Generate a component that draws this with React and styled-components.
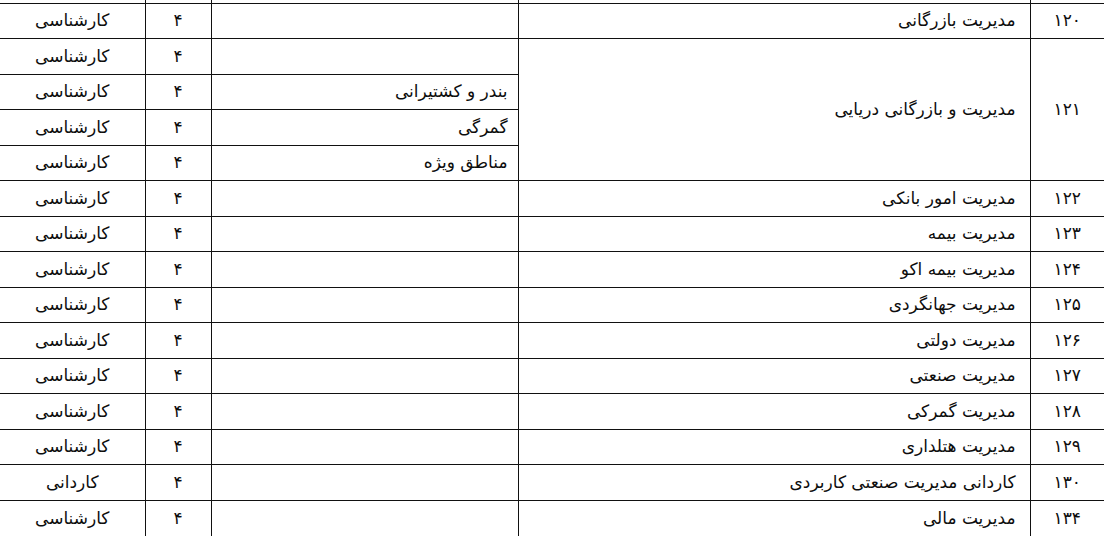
import React from 'react';
import styled, { createGlobalStyle } from 'styled-components';

const GlobalStyle = createGlobalStyle`
  html, body {
    margin: 0;
    padding: 0;
    background: #ffffff;
    overflow: hidden;
  }
`;

const Page = styled.div`
  width: 1104px;
  height: 537px;
  overflow: hidden;
`;

const Table = styled.table`
  direction: rtl;
  width: 1104px;
  margin-top: -32.5px;
  border-collapse: collapse;
  border-style: hidden;
  table-layout: fixed;
  font-family: "DejaVu Sans", "Noto Sans", sans-serif;
  font-size: 17px;
  color: #0d0d0d;
`;

const Row = styled.tr`
  height: 35.5px;
`;

const Cell = styled.td`
  border: 1px solid #111;
  padding: 0 ${(p) => p.$pad || 0}px;
  text-align: ${(p) => p.$align || 'center'};
  vertical-align: middle;
  white-space: nowrap;
  line-height: 1;
`;

const rows = [
  { no: '۱۲۰', name: 'مدیریت بازرگانی', degree: 'کارشناسی' },
  {
    no: '۱۲۱',
    name: 'مدیریت و بازرگانی دریایی',
    subs: ['', 'بندر و کشتیرانی', 'گمرگی', 'مناطق ویژه'],
    degree: 'کارشناسی',
  },
  { no: '۱۲۲', name: 'مدیریت امور بانکی', degree: 'کارشناسی' },
  { no: '۱۲۳', name: 'مدیریت بیمه', degree: 'کارشناسی' },
  { no: '۱۲۴', name: 'مدیریت بیمه اکو', degree: 'کارشناسی' },
  { no: '۱۲۵', name: 'مدیریت جهانگردی', degree: 'کارشناسی' },
  { no: '۱۲۶', name: 'مدیریت دولتی', degree: 'کارشناسی' },
  { no: '۱۲۷', name: 'مدیریت صنعتی', degree: 'کارشناسی' },
  { no: '۱۲۸', name: 'مدیریت گمرکی', degree: 'کارشناسی' },
  { no: '۱۲۹', name: 'مدیریت هتلداری', degree: 'کارشناسی' },
  { no: '۱۳۰', name: 'کاردانی مدیریت صنعتی کاربردی', degree: 'کاردانی' },
  { no: '۱۳۴', name: 'مدیریت مالی', degree: 'کارشناسی' },
];

const Colgroup = () => (
  <colgroup>
    <col style={{ width: 74 }} />
    <col style={{ width: 512 }} />
    <col style={{ width: 307 }} />
    <col style={{ width: 66 }} />
    <col style={{ width: 145 }} />
  </colgroup>
);

const App = () => {
  const body = [
    // the row above, cut off by the top edge of the page
    <Row key="prev">
      <Cell />
      <Cell />
      <Cell />
      <Cell />
      <Cell />
    </Row>,
  ];
  rows.forEach((r) => {
    if (r.subs) {
      r.subs.forEach((s, i) => {
        body.push(
          <Row key={r.no + i}>
            {i === 0 && <Cell rowSpan={r.subs.length}>{r.no}</Cell>}
            {i === 0 && (
              <Cell rowSpan={r.subs.length} $align="right" $pad={14}>
                {r.name}
              </Cell>
            )}
            <Cell $align="right" $pad={10}>{s}</Cell>
            <Cell>۴</Cell>
            <Cell>{r.degree}</Cell>
          </Row>
        );
      });
    } else {
      body.push(
        <Row key={r.no}>
          <Cell>{r.no}</Cell>
          <Cell $align="right" $pad={14}>{r.name}</Cell>
          <Cell $align="right" $pad={10} />
          <Cell>۴</Cell>
          <Cell>{r.degree}</Cell>
        </Row>
      );
    }
  });

  return (
    <Page>
      <GlobalStyle />
      <Table>
        <Colgroup />
        <tbody>{body}</tbody>
      </Table>
    </Page>
  );
};

export default App;
